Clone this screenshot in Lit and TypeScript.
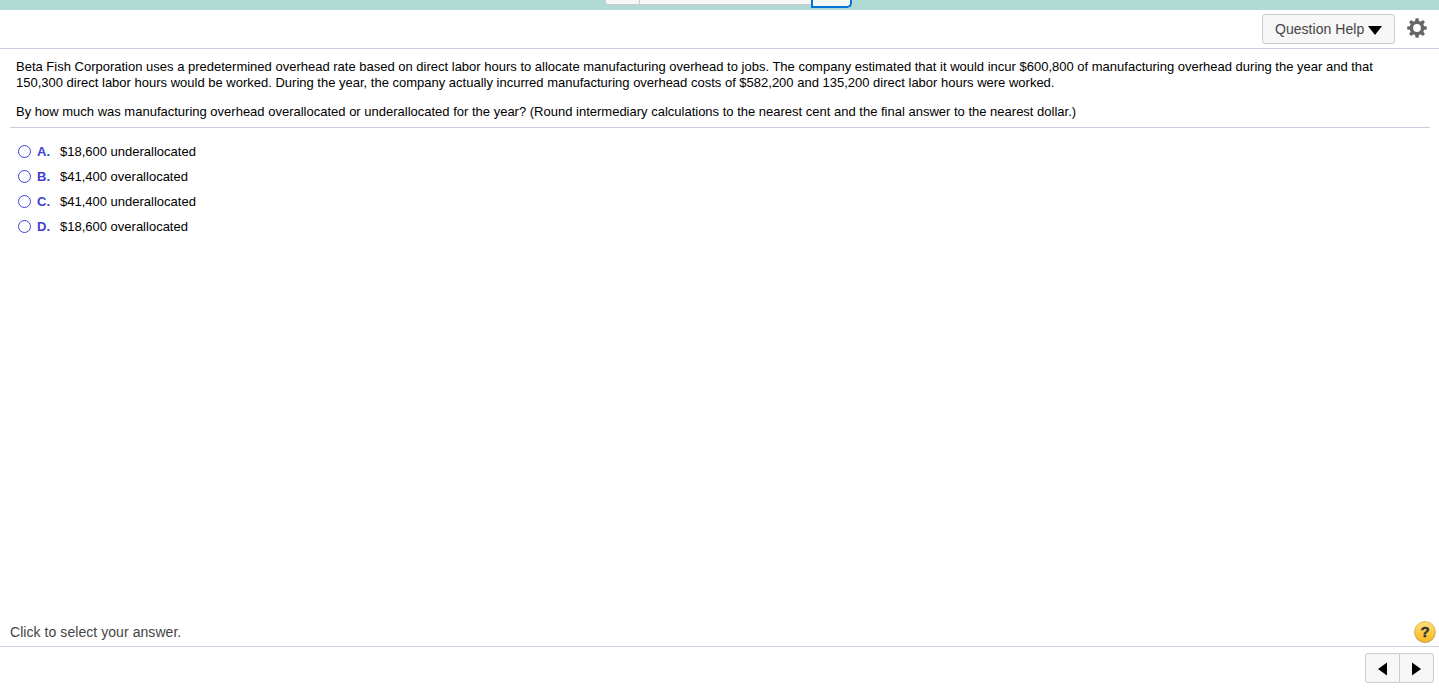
import { LitElement, css, html, svg } from 'lit';
import { customElement, property, state } from 'lit/decorators.js';

const choices = [
  { letter: 'A', text: '$18,600 underallocated' },
  { letter: 'B', text: '$41,400 overallocated' },
  { letter: 'C', text: '$41,400 underallocated' },
  { letter: 'D', text: '$18,600 overallocated' },
];

@customElement('quiz-choice')
export class QuizChoice extends LitElement {
  static styles = css`
    :host {
      display: flex;
      align-items: center;
      height: 25px;
      cursor: pointer;
    }

    .radio {
      width: 13px;
      height: 13px;
      margin-right: 6px;
    }

    .letter {
      width: 23px;
      color: #4040d4;
      font-weight: bold;
    }
  `;

  @property() letter = '';
  @property({ type: Boolean }) selected = false;

  render() {
    return html`
      <svg class="radio" viewBox="0 0 13 13">
        <circle cx="6.5" cy="6.5" r="6" fill="#fff" stroke="#4040d4" />
        ${this.selected ? svg`<circle cx="6.5" cy="6.5" r="3" fill="#4040d4" />` : ''}
      </svg>
      <span class="letter">${this.letter}.</span>
      <slot></slot>
    `;
  }
}

@customElement('app-root')
export class AppRoot extends LitElement {
  static styles = css`
    :host {
      display: flex;
      flex-direction: column;
      height: 100vh;
      overflow: hidden;
      background: #fff;
      color: #000;
      font-family: 'Liberation Sans', Arial, sans-serif;
      font-size: 13px;
    }

    * {
      box-sizing: border-box;
    }

    .strip {
      display: flex;
      flex: none;
      align-items: flex-start;
      height: 10px;
      padding-left: 605px;
      background: #b2dad4;
    }

    .strip-cell {
      height: 5px;
      border: 1px solid #c8cccb;
      border-top: 0;
      background: #f7f7f7;
    }

    .strip-prev {
      width: 35px;
      border-radius: 0 0 0 3px;
    }

    .strip-title {
      width: 171px;
      border-left: 0;
      border-right: 0;
    }

    .strip-next {
      width: 41px;
      height: 7.5px;
      border: 2.5px solid #0374dc;
      border-top: 0;
      border-radius: 0 0 5px 0;
      background: #f7f7f7;
    }

    .toolbar {
      display: flex;
      flex: none;
      align-items: flex-start;
      justify-content: flex-end;
      gap: 11.5px;
      height: 39px;
      padding: 4px 12.5px 0 0;
      border-bottom: 1px solid #ccd;
    }

    button {
      padding: 0;
      border: 1px solid #ccc;
      border-radius: 3px;
      background: #f7f7f7;
      font: inherit;
    }

    .help {
      display: flex;
      align-items: center;
      gap: 4px;
      width: 133px;
      height: 30px;
      padding-left: 12px;
      color: #444;
      font-size: 14px;
      letter-spacing: 0.04px;
      white-space: nowrap;
    }

    .arrow {
      flex: none;
      width: 14px;
      height: 9px;
      margin-top: 2px;
    }

    .gear {
      width: 20px;
      height: 20px;
      margin-top: 4px;
    }

    .problem {
      flex: none;
      height: 79px;
      margin: 0 9px 0 10px;
      padding: 10px 6px 0;
      border-bottom: 1px solid #ccd;
      line-height: 16px;
    }

    p {
      margin: 0 0 13px;
    }

    .choices {
      flex: 1;
      padding: 11px 18px 0;
    }

    .status {
      display: flex;
      flex: none;
      align-items: center;
      justify-content: space-between;
      height: 29px;
      padding: 0 3px 0 10px;
      border-bottom: 1px solid #ccd3e6;
      color: #444;
      font-size: 14px;
      letter-spacing: 0.06px;
    }

    .hint {
      width: 22px;
      height: 24px;
    }

    .mark {
      font-size: 15px;
      font-weight: bold;
    }

    .pager {
      display: flex;
      flex: none;
      justify-content: flex-end;
      height: 43px;
      padding: 6px 5px 0 0;
    }

    .step {
      display: flex;
      align-items: center;
      justify-content: center;
      width: 35px;
      height: 30px;
    }

    .back {
      border-radius: 3px 0 0 3px;
    }

    .next {
      margin-left: -1px;
      border-radius: 0 3px 3px 0;
    }

    .step svg {
      width: 9px;
      height: 14px;
      margin: 2px 1px 0 0;
    }
  `;

  @state() private selected = '';

  render() {
    return html`
      <div class="strip">
        <div class="strip-cell strip-prev"></div>
        <div class="strip-cell strip-title"></div>
        <div class="strip-next"></div>
      </div>

      <header class="toolbar">
        <button class="help">
          <span>Question Help</span>
          <svg class="arrow" viewBox="0 0 14 9"><path d="M0 0h14L7 9z" /></svg>
        </button>
        <svg class="gear" viewBox="-10 -10 20 20">
          <g fill="#666">
            ${[0, 45, 90, 135].map(
              (angle) => svg`<path d="M-2.1 -6 -1.4 -9.8H1.4L2.1 -6V6L1.4 9.8H-1.4L-2.1 6z" transform="rotate(${angle})" />`
            )}
            <circle r="7.3" />
          </g>
          <circle r="3.9" fill="#fff" />
        </svg>
      </header>

      <section class="problem">
        <p>
          Beta Fish Corporation uses a predetermined overhead rate based on direct labor hours to allocate manufacturing overhead to jobs. The company estimated that it would incur $600,800 of manufacturing overhead during the year and that<br />
          150,300 direct labor hours would be worked. During the year, the company actually incurred manufacturing overhead costs of $582,200 and 135,200 direct labor hours were worked.
        </p>
        <p>
          By how much was manufacturing overhead overallocated or underallocated for the year? (Round intermediary calculations to the nearest cent and the final answer to the nearest dollar.)
        </p>
      </section>

      <main class="choices">
        ${choices.map(
          ({ letter, text }) => html`
            <quiz-choice
              .letter=${letter}
              .selected=${this.selected === letter}
              @click=${() => (this.selected = letter)}
            >${text}</quiz-choice>
          `
        )}
      </main>

      <div class="status">
        <span>Click to select your answer.</span>
        <svg class="hint" viewBox="0 0 22 24">
          <defs>
            <linearGradient id="gold" x1="0" y1="0" x2="0" y2="1">
              <stop offset="0" stop-color="#ffe07a" />
              <stop offset="1" stop-color="#f9b81c" />
            </linearGradient>
          </defs>
          <circle cx="11" cy="12.6" r="10.6" fill="#b9a98a" />
          <circle cx="11" cy="11.8" r="10.3" fill="url(#gold)" stroke="#dfae3c" stroke-width="0.8" />
          <text class="mark" x="11" y="17" text-anchor="middle" fill="#333" stroke="#333" stroke-width="0.4">?</text>
        </svg>
      </div>

      <footer class="pager">
        <button class="step back" aria-label="Previous">
          <svg viewBox="0 0 9 14"><path d="M9 .5v13L0 7z" /></svg>
        </button>
        <button class="step next" aria-label="Next">
          <svg viewBox="0 0 9 14"><path d="M0 .5v13L9 7z" /></svg>
        </button>
      </footer>
    `;
  }
}
